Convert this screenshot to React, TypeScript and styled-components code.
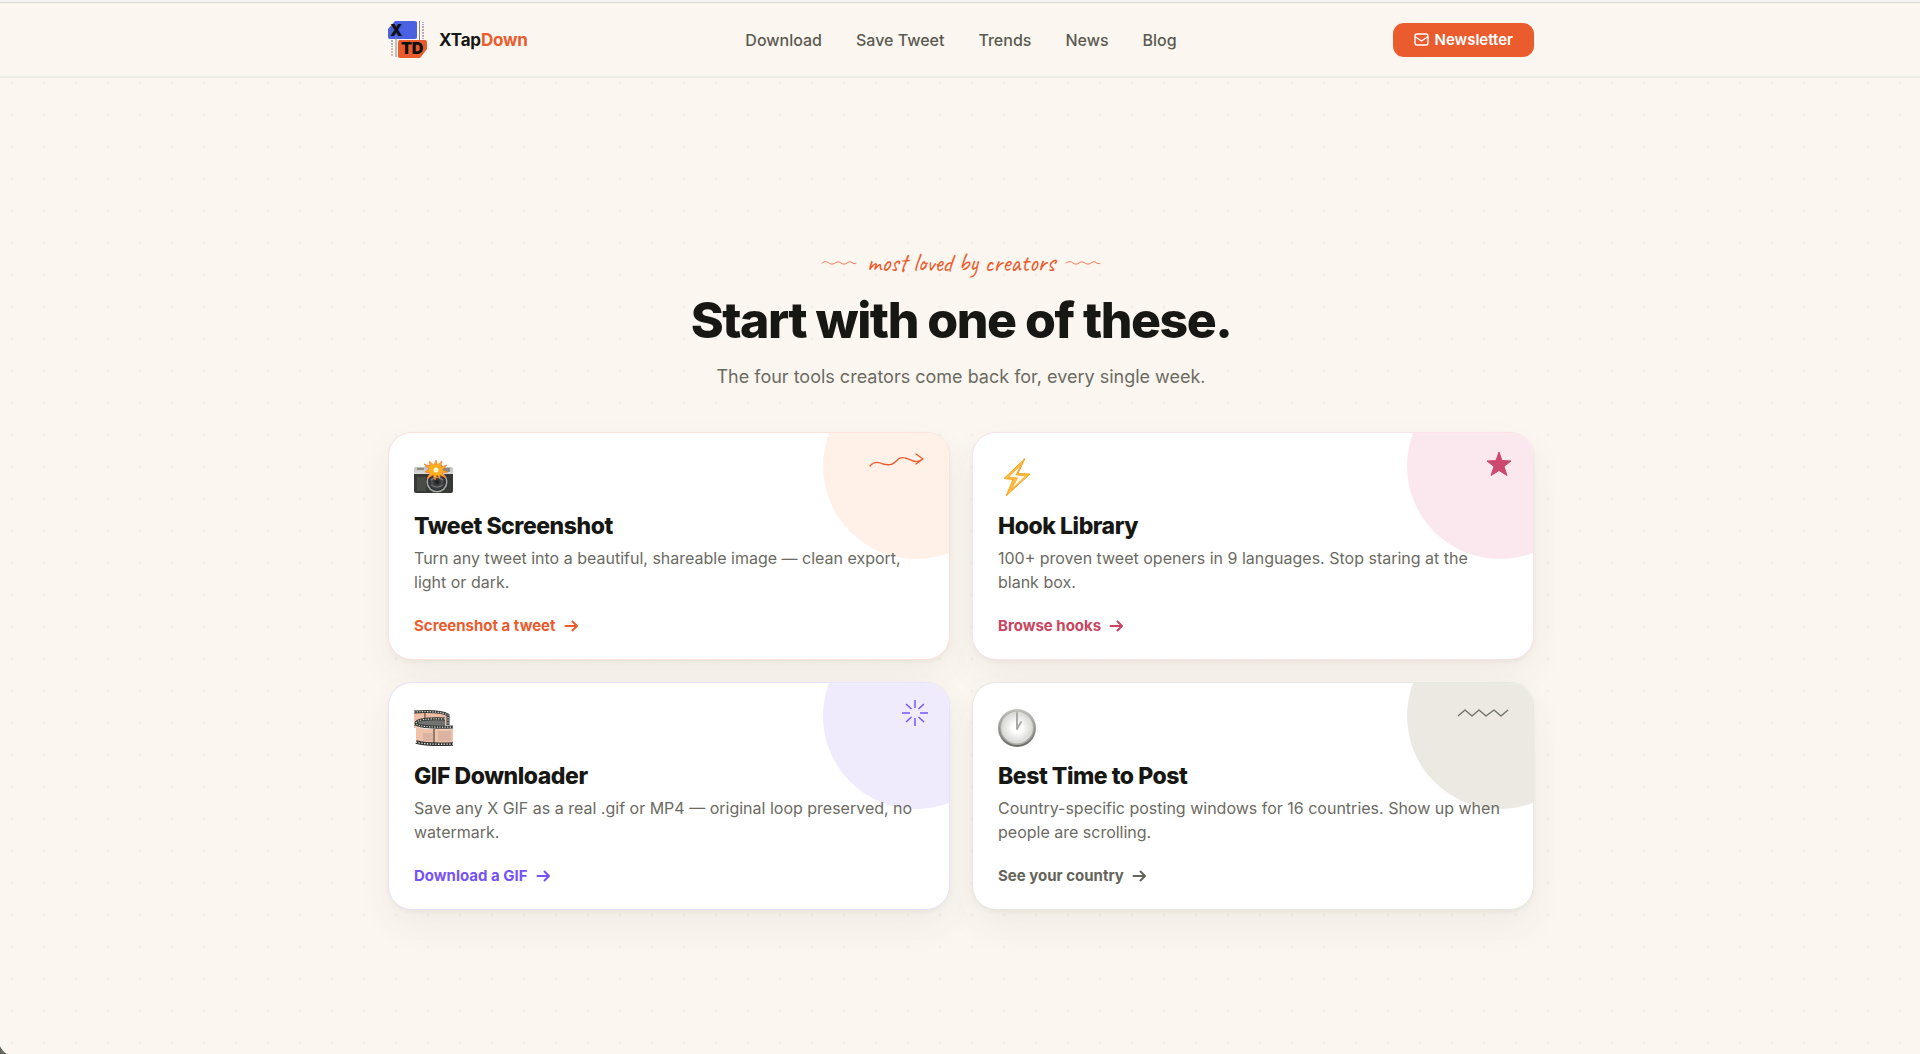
import React from "react";
import styled, { createGlobalStyle } from "styled-components";

const GlobalStyle = createGlobalStyle`
  *, *::before, *::after { box-sizing: border-box; }
  body {
    margin: 0;
    background-color: #fbf6f0;
    background-image: radial-gradient(circle at 12px 19px, #f4efe8 1px, transparent 2px);
    background-size: 32px 32px;
    color: #171713;
    font-family: Inter, "Liberation Sans", sans-serif;
    -webkit-font-smoothing: antialiased;
    min-height: 100vh;
  }
  a { color: inherit; text-decoration: none; }
  h1, h2, p { margin: 0; }
`;

const Page = styled.div`
  min-height: 100vh;
  border-top: 2px solid #f4f3f2;
`;

const Header = styled.header`
  background: #fbf6ef;
  border-top: 1px solid #d9d8d6;
  border-bottom: 2px solid #eeeee6;
`;

const Container = styled.div`
  width: 100%;
  max-width: 1194px;
  margin: 0 auto;
  padding: 0 23px 0 25px;
`;

const Bar = styled(Container)`
  display: grid;
  grid-template-columns: 1fr auto 1fr;
  align-items: center;
  height: 73px;
`;

const Brand = styled.a`
  display: flex;
  align-items: center;
  gap: 12px;
  font-size: 17px;
  font-weight: 700;
  line-height: 24px;
  letter-spacing: -0.01em;
`;

const Accent = styled.span`
  color: #ea5c2e;
`;

const Nav = styled.nav`
  display: flex;
  gap: 34px;
  font-size: 16px;
  font-weight: 500;
  line-height: 24px;
  color: #5a5a52;
`;

const Newsletter = styled.button`
  justify-self: end;
  display: flex;
  align-items: center;
  gap: 6px;
  height: 34px;
  padding: 0 21px;
  border: 0;
  border-radius: 11px;
  background: #ea5c2e;
  color: #fff;
  font: 600 15px/20px Inter, sans-serif;
  cursor: pointer;
`;

const Section = styled.section`
  padding: 168px 0 144px;
`;

const Intro = styled.div`
  display: flex;
  flex-direction: column;
  align-items: center;
  text-align: center;
`;

const Eyebrow = styled.p`
  display: flex;
  align-items: center;
  gap: 10px;
  color: #ea5c2e;
  font-family: Caveat, Lato, cursive;
  font-size: 25px;
  line-height: 34px;
`;

const Heading = styled.h1`
  margin-top: 12px;
  font-size: 50px;
  font-weight: 800;
  line-height: 56px;
  letter-spacing: -0.03em;
`;

const Lead = styled.p`
  margin-top: 14px;
  font-size: 18px;
  line-height: 30px;
  color: #6b6b63;
`;

const Cards = styled.div`
  display: grid;
  grid-template-columns: repeat(2, 1fr);
  gap: 22px;
  margin-top: 40px;
  @media (max-width: 760px) { grid-template-columns: 1fr; }
`;

const Card = styled.article<{ $edge: string }>`
  position: relative;
  overflow: hidden;
  padding: 25px 25px 21px;
  border: 1px solid ${(p) => p.$edge};
  border-radius: 24px;
  background: #fff;
  box-shadow: 0 2px 4px rgba(60, 60, 40, 0.05), 0 16px 36px rgba(60, 60, 40, 0.06);
`;

const Blob = styled.div<{ $fill: string }>`
  position: absolute;
  top: -60px;
  right: -60px;
  width: 186px;
  height: 186px;
  border-radius: 50%;
  background: ${(p) => p.$fill};
`;

const Doodle = styled.div`
  position: absolute;
  top: 17px;
  right: 22px;
  display: flex;
  align-items: center;
`;

const Body = styled.div`
  position: relative;
`;

const Title = styled.h2`
  margin-top: 12px;
  font-size: 23px;
  font-weight: 800;
  line-height: 32px;
  letter-spacing: -0.02em;
`;

const Text = styled.p`
  margin-top: 4px;
  font-size: 16px;
  line-height: 24px;
  color: #6b6b63;
`;

const More = styled.a<{ $color: string }>`
  display: inline-flex;
  align-items: center;
  gap: 8px;
  margin-top: 20px;
  font-size: 15px;
  font-weight: 700;
  line-height: 24px;
  color: ${(p) => p.$color};
`;

const Icon = styled.svg`
  display: block;
  flex: none;
  overflow: visible;
`;

const Corner = styled.svg`
  position: fixed;
  left: 0;
  bottom: 0;
`;

const LogoText = styled.text`
  font-family: Inter, sans-serif;
  font-weight: 900;
`;

const Logo = () => (
  <Icon width="39" height="37" viewBox="0 0 39 37" aria-hidden="true">
    <path d="M7 0h20a2 2 0 0 1 2 2v14a2 2 0 0 1-2 2H2a2 2 0 0 1-2-2V8z" fill="#4a62e2" />
    <path d="M12 19h25a2 2 0 0 1 2 2v7l-7 9H12a2 2 0 0 1-2-2V21a2 2 0 0 1 2-2z" fill="#ea5c2e" />
    <LogoText x="2" y="15" fontSize="16" fill="#111">X</LogoText>
    <LogoText x="13" y="33" fontSize="16" fill="#111">TD</LogoText>
    <path d="M31.500 0v19M8 16v20" stroke="#888" strokeWidth="1" />
    <path d="M35 5v13" stroke="#999" strokeWidth="1.500" strokeDasharray="2 1" />
    <path d="M35 1v3" stroke="#8b98e8" strokeWidth="1.500" strokeDasharray="1 1" />
    <path d="M4 19v7" stroke="#999" strokeWidth="1.500" strokeDasharray="2 1" />
    <path d="M4 27v8" stroke="#f0a088" strokeWidth="1.500" strokeDasharray="2 1" />
  </Icon>
);

const Mail = () => (
  <Icon width="15" height="15" viewBox="0 0 15 15" fill="none" stroke="#fff" strokeWidth="1.400" strokeLinecap="round" strokeLinejoin="round" aria-hidden="true">
    <rect x="1" y="2" width="13" height="11" rx="2" />
    <path d="M1.500 5l6 4 6-4" />
  </Icon>
);

const Wave = () => (
  <Icon width="36" height="6" viewBox="0 0 36 6" fill="none" stroke="#ea5c2e" strokeWidth="1" opacity="0.8" strokeLinecap="round" aria-hidden="true">
    <path d="M1 3C4 1 6 1.500 8 3s4 1.500 6 0 4-1.500 6 0 4 1.500 6 0 4-1.500 5-.5 3 1.500 4 1" />
  </Icon>
);

const Arrow = () => (
  <Icon width="15" height="14" viewBox="0 0 15 14" fill="none" stroke="currentColor" strokeWidth="2" strokeLinecap="round" strokeLinejoin="round" aria-hidden="true">
    <path d="M1.500 7h11M8.500 2.500L13 7l-4.500 4.500" />
  </Icon>
);

const Camera = () => (
  <Icon width="40" height="40" viewBox="0 0 40 40" aria-hidden="true">
    <defs>
      <linearGradient id="camTop" x2="0" y2="1"><stop stopColor="#b5b5b1" /><stop offset="1" stopColor="#e4e4e0" /></linearGradient>
      <radialGradient id="lens"><stop stopColor="#171717" /><stop offset=".55" stopColor="#4a4e4f" /><stop offset="1" stopColor="#26282a" /></radialGradient>
    </defs>
    <path d="M2 9h8l2-2h16l2 2h7a2 2 0 0 1 2 2v7H0v-7a2 2 0 0 1 2-2z" fill="url(#camTop)" />
    <path d="M3 11h7M29 11h7M29 13h7" stroke="#777" strokeWidth="1.500" />
    <path d="M0 16h39v17a2 2 0 0 1-2 2H2a2 2 0 0 1-2-2z" fill="#373935" />
    <path d="M3 19h9v14H3z" fill="#484b46" />
    <circle cx="23" cy="24" r="10.500" fill="#a5a7a6" />
    <circle cx="23" cy="24" r="9" fill="url(#lens)" />
    <path d="M17 22q6-5 12 0" stroke="#898d8e" strokeWidth="1.200" fill="none" />
    <path d="M17 27q6 4 12 0" stroke="#777" strokeWidth="1" fill="none" />
    <path d="M22 2l1.500 5 4.500-4-1 6 6-2-5 5 6 2-6 1 4 5-6-3 0 4-3-4-2 5-2-5-6 4 3-6-5-1 4-3-5-5 6 2-1-5 5 4z" fill="#fbae20" stroke="#f4712c" strokeWidth=".6" />
    <circle cx="22" cy="12" r="2.500" fill="#fff7d2" />
  </Icon>
);

const Bolt = () => (
  <Icon width="40" height="40" viewBox="0 0 40 40" aria-hidden="true">
    <path d="M27 .5L6 20.500l9 1L8 38l24-22-12-.5z" fill="#ffbe35" stroke="#f3a32b" strokeWidth="1" strokeLinejoin="round" />
    <path d="M22.500 7.500L10.500 19l9 1-6 11.500L27.500 18l-9.500-1z" fill="#fffaf0" stroke="#e8a33a" strokeWidth=".7" />
  </Icon>
);

const Film = () => (
  <Icon width="40" height="40" viewBox="0 0 40 40" aria-hidden="true">
    <path d="M0 3c15 0 28 0 33 3v11L0 20z" fill="#eebfa6" />
    <path d="M0 4c16-1 29 0 34 3v10" fill="none" stroke="#383a38" strokeWidth="3" />
    <path d="M0 4c16-1 29 0 34 3v10" fill="none" stroke="#e8e4df" strokeWidth="1.200" strokeDasharray="1.200 1.400" />
    <path d="M11 4v11" stroke="#333" />
    <path d="M2 14q4-4 29-4v8H0z" fill="#70736f" />
    <path d="M31 11Q4 10 2 15q0 5 37 4" fill="none" stroke="#303330" strokeWidth="3" />
    <path d="M31 11Q4 10 2 15q0 5 37 4" fill="none" stroke="#eee" strokeWidth="1.200" strokeDasharray="1.200 1.400" />
    <path d="M2 19q10 3 37 2v15q-31 1-37-2z" fill="#efc2aa" />
    <path d="M20 21v15" stroke="#333" />
    <path d="M24 23h13v10H24zM9 25h10v8H9z" fill="#dbb3a3" />
    <path d="M2 34q10 3 37 2" fill="none" stroke="#303330" strokeWidth="3.500" />
    <path d="M2 34q10 3 37 2" fill="none" stroke="#eee" strokeWidth="1.300" strokeDasharray="1.300 1.500" />
  </Icon>
);

const Clock = () => (
  <Icon width="40" height="40" viewBox="0 0 40 40" aria-hidden="true">
    <defs>
      <linearGradient id="rim" x2="0" y2="1"><stop stopColor="#c4c4c1" /><stop offset="1" stopColor="#696966" /></linearGradient>
      <radialGradient id="face"><stop offset=".3" stopColor="#fff" /><stop offset="1" stopColor="#d5d5d1" /></radialGradient>
    </defs>
    <circle cx="19" cy="20" r="19" fill="url(#rim)" />
    <circle cx="19" cy="20" r="17" fill="#aaa9a6" />
    <circle cx="19" cy="19.500" r="16" fill="url(#face)" />
    <path d="M19 21V5M19 21l4-7" fill="none" stroke="#aaaaa6" strokeWidth="2" strokeLinecap="round" strokeLinejoin="round" />
  </Icon>
);

const Squiggle = () => (
  <Icon width="58" height="24" viewBox="0 0 58 24" fill="none" stroke="#ea5c2e" strokeWidth="1.300" strokeLinecap="round" strokeLinejoin="round" aria-hidden="true">
    <path d="M1 16c4-5 9-4 13-2 15 4 12-9 22-6 6 1 10 6 16 2M47 4l7 5-7 5" />
  </Icon>
);

const Star = () => (
  <Icon width="26" height="28" viewBox="0 0 26 28" fill="#cc486e" stroke="#cc486e" strokeWidth="1" strokeLinejoin="round" aria-hidden="true">
    <path d="M14 2l3 8.500 9 .5-7 5.500 3 9-8-5-8 5 3-9-7-5.500 9-.5z" />
  </Icon>
);

const Burst = () => (
  <Icon width="26" height="26" viewBox="0 0 26 26" stroke="#7856fb" strokeWidth="1.500" aria-hidden="true">
    <path d="M14 0v8M14 18v8M1 13h8M19 13h8M5 4l5.500 5M23 4l-5.500 5M5 22l5.500-5M23 22l-5.500-5" />
  </Icon>
);

const Zigzag = () => (
  <Icon width="52" height="26" viewBox="0 0 52 26" fill="none" stroke="#74766c" strokeWidth="1.500" strokeLinejoin="round" aria-hidden="true">
    <path d="M-1 16l7-6 7 6 7-6 7 6 8-6 7 6 7-6" />
  </Icon>
);

const tools = [
  { title: "Tweet Screenshot", text: "Turn any tweet into a beautiful, shareable image — clean export, light or dark.", more: "Screenshot a tweet", color: "#ea5c2e", edge: "#fde3dc", fill: "#fff1e8", icon: <Camera />, doodle: <Squiggle /> },
  { title: "Hook Library", text: "100+ proven tweet openers in 9 languages. Stop staring at the blank box.", more: "Browse hooks", color: "#c94561", edge: "#fbe2e8", fill: "#fbe8ee", icon: <Bolt />, doodle: <Star /> },
  { title: "GIF Downloader", text: "Save any X GIF as a real .gif or MP4 — original loop preserved, no watermark.", more: "Download a GIF", color: "#7654f4", edge: "#e8e3fb", fill: "#efeafc", icon: <Film />, doodle: <Burst /> },
  { title: "Best Time to Post", text: "Country-specific posting windows for 16 countries. Show up when people are scrolling.", more: "See your country", color: "#65655b", edge: "#e6e9df", fill: "#ebe9e2", icon: <Clock />, doodle: <Zigzag /> },
];

export default function App() {
  return (
    <Page>
      <GlobalStyle />
      <Header>
        <Bar>
          <Brand href="#"><Logo /><span>XTap<Accent>Down</Accent></span></Brand>
          <Nav aria-label="Main">
            {["Download", "Save Tweet", "Trends", "News", "Blog"].map((label) => (
              <a key={label} href="#">{label}</a>
            ))}
          </Nav>
          <Newsletter type="button"><Mail />Newsletter</Newsletter>
        </Bar>
      </Header>
      <Section>
        <Container>
          <Intro>
            <Eyebrow><Wave /><span>most loved by creators</span><Wave /></Eyebrow>
            <Heading>Start with one of these.</Heading>
            <Lead>The four tools creators come back for, every single week.</Lead>
          </Intro>
          <Cards>
            {tools.map((tool) => (
              <Card key={tool.title} $edge={tool.edge}>
                <Blob $fill={tool.fill} />
                <Doodle>{tool.doodle}</Doodle>
                <Body>
                  {tool.icon}
                  <Title>{tool.title}</Title>
                  <Text>{tool.text}</Text>
                  <More href="#" $color={tool.color}>{tool.more}<Arrow /></More>
                </Body>
              </Card>
            ))}
          </Cards>
        </Container>
      </Section>
      <Corner width="7" height="8" viewBox="0 0 7 8" aria-hidden="true">
        <path d="M0 0q2 5 7 8H0z" fill="#65675f" />
      </Corner>
    </Page>
  );
}
